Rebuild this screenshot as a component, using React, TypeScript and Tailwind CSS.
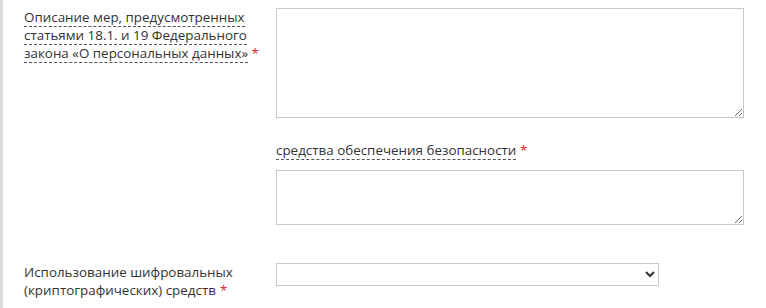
import React from "react";

export default function App() {
  const font = { fontFamily: '"Open Sans", "Noto Sans", sans-serif' };
  return (
    <div className="w-[766px] h-[308px] bg-white flex overflow-hidden" style={font}>
      <div className="w-[3px] bg-[#dcdcdc] shrink-0" />
      <div className="flex flex-col pt-[8px] pl-[21px] text-[13.4px] leading-[18px] text-[#333]">
        <div className="flex">
          <div className="w-[252px] shrink-0 pr-[6px]">
            <span className="border-b border-dashed border-[#555]">
              Описание мер, предусмотренных статьями 18.1. и 19 Федерального закона «О персональных данных»
            </span>{" "}
            <span className="text-[#e31b1b]">*</span>
          </div>
          <div className="flex flex-col">
            <textarea className="w-[468px] h-[110px] border border-[#c8c8c8] bg-white outline-none" />
            <div className="mt-[23px]">
              <span className="border-b border-dashed border-[#555]">средства обеспечения безопасности</span>{" "}
              <span className="text-[#e31b1b]">*</span>
            </div>
            <textarea className="mt-[11px] w-[468px] h-[55px] border border-[#c8c8c8] bg-white outline-none" />
          </div>
        </div>
        <div className="flex mt-[38px]">
          <div className="w-[252px] shrink-0 pr-[6px]">
            <span>Использование шифровальных (криптографических) средств</span>
            <span className="text-[#e31b1b] ml-[4px]">*</span>
          </div>
          <select className="w-[383px] h-[23px] border border-[#c8c8c8] bg-white text-[13px]">
            <option value=""></option>
          </select>
        </div>
      </div>
    </div>
  );
}
